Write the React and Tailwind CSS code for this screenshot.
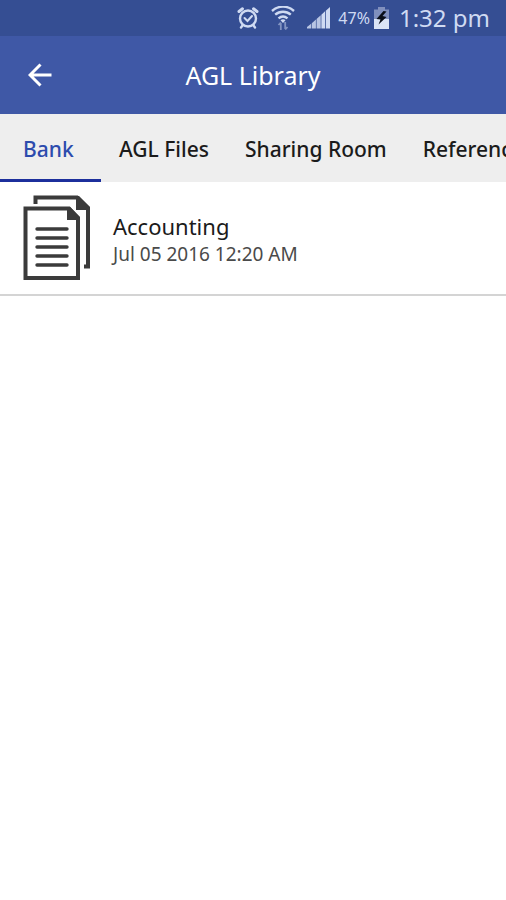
import { useState } from "react";

function AlarmIcon() {
  return (
    <svg width="22" height="24" viewBox="0 0 22 24" fill="none" stroke="currentColor" strokeLinecap="round" aria-hidden="true">
      <circle cx="11" cy="12.5" r="8" strokeWidth="2.4" />
      <path d="M2 5.500 5.500 2.800M20 5.500 16.500 2.800" strokeWidth="3" />
      <path d="m7.500 12 3 3 4.500-5" strokeWidth="2" />
      <path d="m5.500 19.500-1.500 2M16.500 19.500l1.500 2" strokeWidth="2.400" />
    </svg>
  );
}

function WifiIcon() {
  return (
    <svg width="24" height="24" viewBox="0 0 24 24" fill="none" stroke="currentColor" aria-hidden="true">
      <path d="M1 5C7.500-.8 16.500-.8 23 5M4.200 8.700c4.600-4 11-4 15.600 0M7.500 12.300c2.700-2.300 6.300-2.300 9 0" strokeWidth="2.400" />
      <path d="M9.500 14.300c1.600-1.300 3.400-1.300 5 0L12 17Z" fill="currentColor" stroke="none" />
      <path d="M9.800 24v-7M7.500 19l2.300-2.500M14.200 16v7M16.500 21l-2.300 2.500" strokeWidth="1.800" opacity="0.500" />
    </svg>
  );
}

function SignalIcon() {
  return (
    <svg width="23" height="24" viewBox="0 0 24 24" fill="currentColor" aria-hidden="true">
      <path d="M0 23v-1.500L4.300 18v5ZM5 23v-5.500l4.300-4V23ZM10 23V13l4.300-4v14Z" opacity="0.850" />
      <path d="M15 23V8.500l3.800-3.500V23ZM19.600 23V4.500L24 .500V23Z" />
    </svg>
  );
}

function BatteryIcon() {
  return (
    <svg width="15" height="22" viewBox="0 0 15 22" aria-hidden="true">
      <path d="M4 0h7v2.500h4V12H0V2.500h4Z" fill="#8190bd" />
      <path d="M0 12h15v10H0Z" fill="#dce5f6" />
      <path d="M9.500 4 2.500 12l4 .500L4.500 17.500l8-7.500-4-1L12.500 4.500Z" fill="#0b0f18" />
    </svg>
  );
}

function BackIcon() {
  return (
    <svg width="24" height="24" viewBox="0 0 24 24" fill="none" stroke="currentColor" strokeWidth="3" aria-hidden="true">
      <path d="M23.500 12H3M12.500 1.500 2 12l10.500 10.500" />
    </svg>
  );
}

function DocumentsIcon() {
  return (
    <svg className="shrink-0" width="68" height="86" viewBox="0 0 68 86" fill="none" stroke="#3b3b3b" aria-hidden="true">
      <path d="M12.500 9V2.500H54L65 13v58.500H61" strokeWidth="4" />
      <path d="M53 1h3l11 11v3H53Z" fill="#3b3b3b" stroke="none" />
      <path d="M2.500 13.500H46L55 23v60h-52.500Z" strokeWidth="4" />
      <path d="M44 12h3l10 10v3H44Z" fill="#3b3b3b" stroke="none" />
      <path d="M14 34h30M14 43h30M14 52h30M14 61h30M14 70h30" strokeWidth="3.400" strokeLinecap="round" />
    </svg>
  );
}

const tabs = ["Bank", "AGL Files", "Sharing Room", "References"];
const files = [{ name: "Accounting", date: "Jul 05 2016 12:20 AM" }];

export default function App() {
  const [active, setActive] = useState("Bank");

  return (
    <div className="min-h-screen overflow-hidden bg-white font-['Noto_Sans',sans-serif] text-[#1b1b1b]">
      <div className="flex h-9 items-center justify-end bg-[#354e93] pr-4 text-[#cfdaf2]">
        <AlarmIcon />
        <span className="ml-3 flex"><WifiIcon /></span>
        <span className="ml-3 flex"><SignalIcon /></span>
        <span className="ml-2 text-base">47%</span>
        <span className="ml-1 flex"><BatteryIcon /></span>
        <span className="ml-2.5 text-2xl">1:32 pm</span>
      </div>

      <header className="grid h-[78px] grid-cols-[80px_1fr_80px] items-center bg-[#3f58a6] text-white">
        <button type="button" aria-label="Back" className="flex h-full items-center justify-center">
          <BackIcon />
        </button>
        <h1 className="pt-0.5 text-center text-[25px]">AGL Library</h1>
      </header>

      <nav role="tablist" className="flex h-[68px] overflow-x-auto bg-[#eeeeee] [scrollbar-width:none]">
        {tabs.map((tab) => (
          <button
            key={tab}
            type="button"
            role="tab"
            aria-selected={tab === active}
            onClick={() => setActive(tab)}
            className={`shrink-0 border-b-3 px-[18px] pt-1.5 text-[21px] font-medium first:w-[101px] first:pr-6 first:pl-[23px] first:text-left ${
              tab === active ? "border-[#1c2f9c] text-[#2c4bad]" : "border-transparent"
            }`}
          >
            {tab}
          </button>
        ))}
      </nav>

      <ul>
        {files.map((file) => (
          <li key={file.name} className="flex h-[114px] items-center gap-[22px] border-b-2 border-[#d4d4d4] px-[23px]">
            <DocumentsIcon />
            <div className="pt-1">
              <div className="text-[22px] leading-7">{file.name}</div>
              <div className="text-[19px] leading-7 text-[#4a4a4a]">{file.date}</div>
            </div>
          </li>
        ))}
      </ul>
    </div>
  );
}
